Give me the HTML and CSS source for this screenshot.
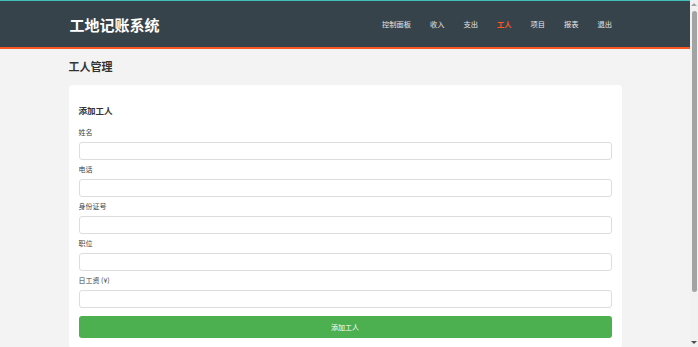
FILE: index.html
```html
<!DOCTYPE html>
<html lang="zh-CN">
<head>
<meta charset="utf-8">
<title>工地记账系统</title>
<link rel="stylesheet" href="styles.css">
</head>
<body>
<div class="page">
<header class="topbar">
  <div class="container topbar-inner">
    <div class="logo">工地记账系统</div>
    <nav class="nav">
      <a href="#" class="nav-link">控制面板</a>
      <a href="#" class="nav-link">收入</a>
      <a href="#" class="nav-link">支出</a>
      <a href="#" class="nav-link active">工人</a>
      <a href="#" class="nav-link">项目</a>
      <a href="#" class="nav-link">报表</a>
      <a href="#" class="nav-link">退出</a>
    </nav>
  </div>
</header>
<main class="container main">
  <h2 class="page-title">工人管理</h2>
  <section class="card">
    <h3 class="card-title">添加工人</h3>
    <form class="form">
      <div class="form-group">
        <label class="label">姓名</label>
        <input class="input" type="text">
      </div>
      <div class="form-group">
        <label class="label">电话</label>
        <input class="input" type="text">
      </div>
      <div class="form-group">
        <label class="label">身份证号</label>
        <input class="input" type="text">
      </div>
      <div class="form-group">
        <label class="label">职位</label>
        <input class="input" type="text">
      </div>
      <div class="form-group">
        <label class="label">日工资 (¥)</label>
        <input class="input" type="text">
      </div>
      <button class="btn" type="button">添加工人</button>
    </form>
  </section>
</main>
</div>
<div class="scrollbar" aria-hidden="true">
  <div class="sb-arrow sb-up"></div>
  <div class="sb-track"><div class="sb-thumb"></div></div>
  <div class="sb-arrow sb-down"></div>
</div>
</body>
</html>
```

FILE: styles.css
```css
html {
  background: #f3f3f3;
}
body {
  margin: 0;
  padding-right: 8px;
  background: #f3f3f3;
  font-family: "Noto Sans CJK SC", "Noto Sans", sans-serif;
  color: #333;
}
.page {
  border-top: 1px solid #3fc1b9;
}
.container {
  width: 553px;
  margin: 0 auto;
}
.topbar {
  background: #37434b;
  border-bottom: 2px solid #ff5722;
}
.topbar-inner {
  height: 46px;
  display: flex;
  align-items: center;
  justify-content: space-between;
}
.logo {
  color: #fff;
  font-size: 15px;
  font-weight: 700;
  line-height: 20px;
  padding-left: 1px;
  padding-top: 1px;
}
.nav {
  display: flex;
  align-items: center;
}
.nav-link {
  color: #e6e6e6;
  text-decoration: none;
  font-size: 7.25px;
  line-height: 10px;
  padding: 0 9.5px;
}
.nav-link.active {
  color: #ff5722;
  font-weight: 700;
}
.main {
  padding: 10px 0 55px;
}
.page-title {
  margin: 0 0 12px;
  font-size: 11px;
  line-height: 14px;
  font-weight: 700;
  color: #333;
}
.card {
  background: #fff;
  border-radius: 4px;
  padding: 19px 10px 10px;
}
.card-title {
  margin: 0 0 11px;
  font-size: 8.5px;
  line-height: 12px;
  font-weight: 700;
  color: #333;
}
.form {
  display: flex;
  flex-direction: column;
}
.form-group {
  display: flex;
  flex-direction: column;
  margin-bottom: 4px;
}
.label {
  font-size: 7px;
  line-height: 10px;
  margin-bottom: 5px;
  color: #444;
}
.input {
  box-sizing: border-box;
  height: 18px;
  border: 1px solid #ddd;
  border-radius: 3px;
  background: #fff;
  margin: 0;
  padding: 0 5px;
  font-size: 7px;
}
.btn {
  margin-top: 4px;
  height: 22px;
  border: none;
  border-radius: 3px;
  background: #4caf50;
  color: #fff;
  font-family: inherit;
  font-size: 7px;
  cursor: pointer;
}
.scrollbar {
  position: fixed;
  top: 0;
  right: 0;
  bottom: 0;
  width: 8px;
  background: #f1f1f1;
  display: flex;
  flex-direction: column;
}
.sb-arrow {
  height: 9px;
  display: flex;
  align-items: center;
  justify-content: center;
}
.sb-up::before {
  content: "";
  border-left: 3px solid transparent;
  border-right: 3px solid transparent;
  border-bottom: 3px solid #a3a3a3;
}
.sb-down::before {
  content: "";
  border-left: 3px solid transparent;
  border-right: 3px solid transparent;
  border-top: 3px solid #505050;
}
.sb-track {
  flex: 1;
  padding: 2px 1.5px 0;
}
.sb-thumb {
  height: 281px;
  background: #a3a3a3;
  border-radius: 3px;
}
```
